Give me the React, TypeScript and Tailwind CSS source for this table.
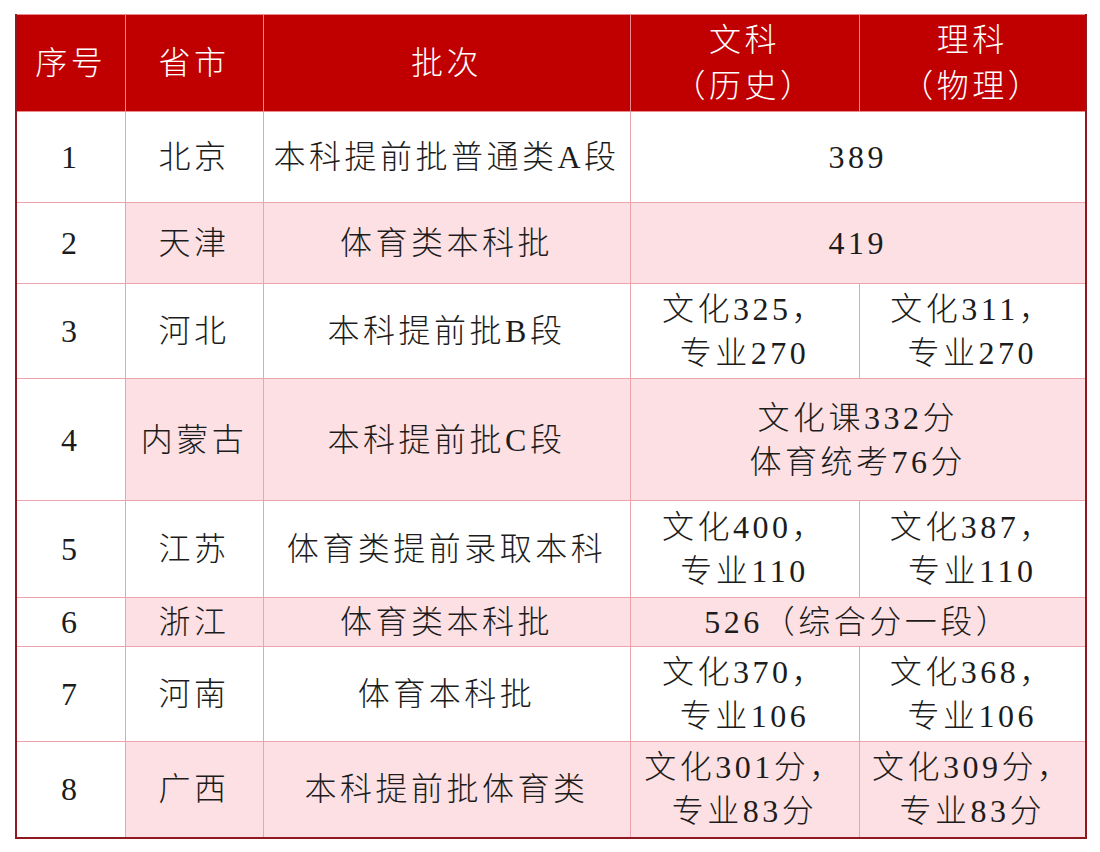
import React from 'react'

type Row = {
  no: string
  province: string
  batch: string
  wen: string[]
  li?: string[]
  height: string
}

const rows: Row[] = [
  { no: "1", province: "北京", batch: "本科提前批普通类A段", wen: ["389"], height: "h-[91px]" },
  { no: "2", province: "天津", batch: "体育类本科批", wen: ["419"], height: "h-[81px]" },
  { no: "3", province: "河北", batch: "本科提前批B段", wen: ["文化325，", "专业270"], li: ["文化311，", "专业270"], height: "h-[95px]" },
  { no: "4", province: "内蒙古", batch: "本科提前批C段", wen: ["文化课332分", "体育统考76分"], height: "h-[122px]" },
  { no: "5", province: "江苏", batch: "体育类提前录取本科", wen: ["文化400，", "专业110"], li: ["文化387，", "专业110"], height: "h-[97px]" },
  { no: "6", province: "浙江", batch: "体育类本科批", wen: ["526（综合分一段）"], height: "h-[48px]" },
  { no: "7", province: "河南", batch: "体育本科批", wen: ["文化370，", "专业106"], li: ["文化368，", "专业106"], height: "h-[95px]" },
  { no: "8", province: "广西", batch: "本科提前批体育类", wen: ["文化301分，", "专业83分"], li: ["文化309分，", "专业83分"], height: "h-[96px]" },
]

const Lines = ({ lines }: { lines: string[] }) => (
  <div className="leading-[44px]">
    {lines.map((l, i) => (
      <div key={i}>{l}</div>
    ))}
  </div>
)

const App = () => {
  return (
    <div className="w-[1100px] h-[852px] bg-white pt-[14px] pl-[15px] font-['Liberation_Serif','Noto_Sans_CJK_SC',serif] font-light text-[32px] tracking-[3.5px] text-[#1c1c1c]">
      <table className="w-[1070px] table-fixed border-collapse border-2 border-t-0 border-[#8e1a1f] text-center">
        <colgroup>
          <col className="w-[109px]" />
          <col className="w-[138px]" />
          <col className="w-[367px]" />
          <col className="w-[229px]" />
          <col className="w-[227px]" />
        </colgroup>
        <thead>
          <tr className="h-[97px] bg-[#c00000] text-white">
            <th className="font-light border border-[#e98a8f] border-l-[#c00000]">序号</th>
            <th className="font-light border border-[#e98a8f]">省市</th>
            <th className="font-light border border-[#e98a8f]">批次</th>
            <th className="font-light border border-[#e98a8f] leading-[46px]">
              <div>文科</div>
              <div>（历史）</div>
            </th>
            <th className="font-light border border-[#e98a8f] border-r-[#8e1a1f] leading-[46px]">
              <div>理科</div>
              <div>（物理）</div>
            </th>
          </tr>
        </thead>
        <tbody>
          {rows.map((r, i) => {
            const pink = i % 2 === 1 ? "bg-[#fde0e3]" : "bg-white"
            return (
              <tr key={r.no} className={r.height}>
                <td className="border border-[#eda3ab] border-l-[#8e1a1f] bg-white">{r.no}</td>
                <td className={`border border-[#eda3ab] ${pink}`}>{r.province}</td>
                <td className={`border border-[#eda3ab] ${pink}`}>{r.batch}</td>
                {r.li ? (
                  <>
                    <td className={`border border-[#eda3ab] ${pink}`}>
                      <Lines lines={r.wen} />
                    </td>
                    <td className={`border border-[#eda3ab] border-r-[#8e1a1f] ${pink}`}>
                      <Lines lines={r.li} />
                    </td>
                  </>
                ) : (
                  <td colSpan={2} className={`border border-[#eda3ab] border-r-[#8e1a1f] ${pink}`}>
                    <Lines lines={r.wen} />
                  </td>
                )}
              </tr>
            )
          })}
        </tbody>
      </table>
    </div>
  )
}

export default App
